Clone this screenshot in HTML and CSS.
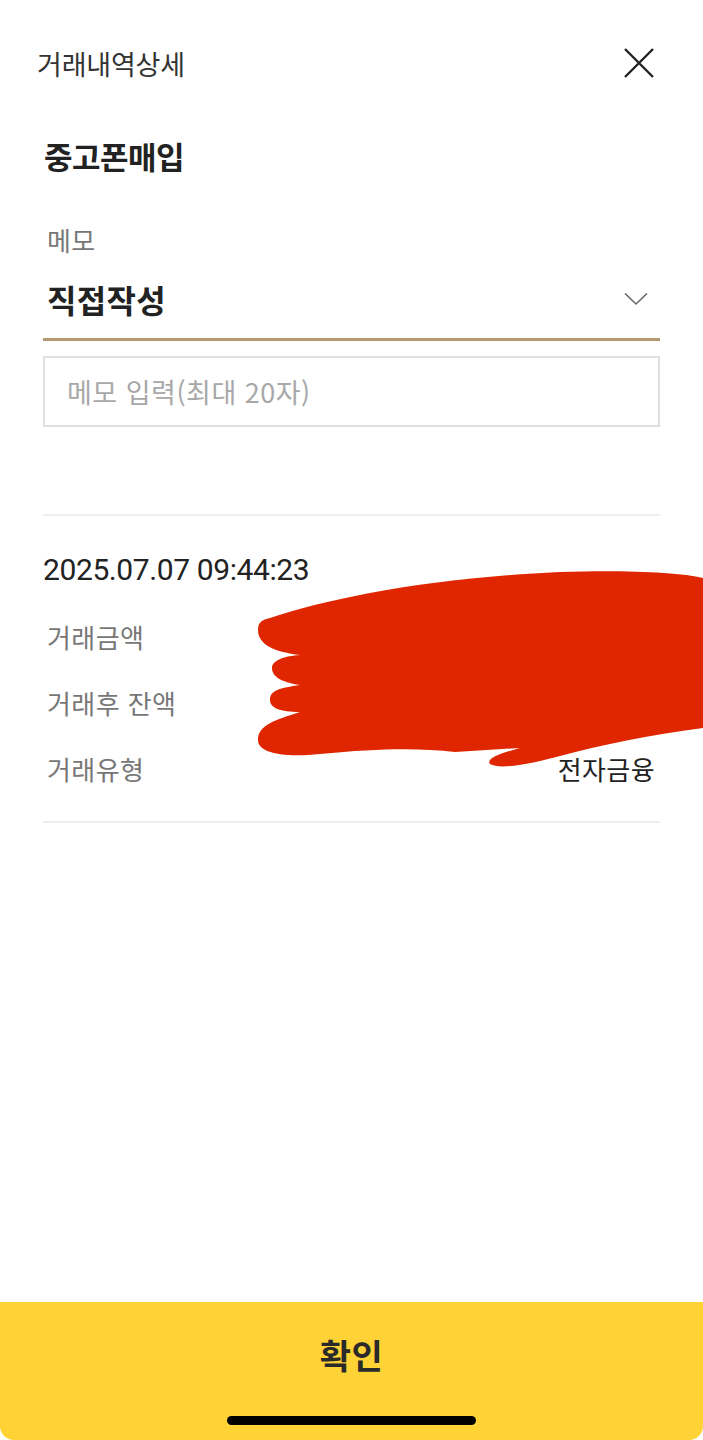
FILE: index.html
```html
<!DOCTYPE html>
<html lang="ko">
<head>
<meta charset="utf-8">
<title>거래내역상세</title>
<link rel="stylesheet" href="styles.css">
</head>
<body>
<div class="page">
  <main class="main">
    <header class="header">
      <h1 class="title">거래내역상세</h1>
      <button class="close" aria-label="닫기">
        <svg width="32" height="32" viewBox="0 0 32 32"><path d="M2 2 L30 30 M30 2 L2 30" stroke="#222" stroke-width="2.4" fill="none"/></svg>
      </button>
    </header>
    <section class="content">
      <div class="subject">중고폰매입</div>
      <div class="memo-label">메모</div>
      <div class="select">
        <span class="select-value">직접작성</span>
        <svg class="chev" width="24" height="14" viewBox="0 0 24 14"><path d="M1 1.5 L12 12 L23 1.5" stroke="#666" stroke-width="1.6" fill="none"/></svg>
      </div>
      <div class="input">메모 입력(최대 20자)</div>
      <div class="divider first"></div>
      <div class="date">2025.07.07 09:44:23</div>
      <div class="row"><span class="label">거래금액</span><span class="value"></span></div>
      <div class="row"><span class="label">거래후 잔액</span><span class="value"></span></div>
      <div class="row"><span class="label">거래유형</span><span class="value">전자금융</span></div>
      <div class="divider last"></div>
    </section>
  </main>
  <footer class="footer">
    <div class="confirm">확인</div>
    <div class="home-bar"></div>
  </footer>
  <svg class="scribble" width="703" height="1440" viewBox="0 0 703 1440">
    <path fill="#E02600" d="M270 618 C330 598 430 578 560 572 C620 570 680 572 703 578 L703 728 C650 735 600 745 560 756 C530 764 500 770 490 764 C485 758 505 752 520 748 L455 752 C420 748 380 748 320 754 C280 758 258 752 258 740 C258 725 275 720 300 712 C280 712 270 708 270 700 C270 690 280 688 300 685 C280 682 272 676 272 668 C272 660 285 656 300 655 C275 652 258 645 258 630 C258 622 262 620 270 618 Z"/>
  </svg>
</div>
</body>
</html>
```

FILE: styles.css
```css
html, body {
  margin: 0;
  padding: 0;
  background: #ffffff;
}
body {
  font-family: "Noto Sans CJK KR", "Noto Sans", Roboto, sans-serif;
  color: #222;
}
.page {
  position: relative;
  width: 703px;
  height: 1440px;
  display: flex;
  flex-direction: column;
  overflow: hidden;
}
.main {
  flex: 1;
}
.header {
  height: 126px;
  display: flex;
  align-items: center;
  justify-content: space-between;
  padding: 0 48px 0 37px;
}
.title {
  margin: 0;
  font-size: 27px;
  font-weight: 400;
  letter-spacing: -0.2px;
  color: #333;
}
.close {
  border: 0;
  background: none;
  padding: 0;
  width: 32px;
  height: 32px;
  display: flex;
}
.content {
  padding: 0 43px;
}
.subject {
  height: 60px;
  line-height: 60px;
  font-size: 31px;
  font-weight: 700;
  letter-spacing: -0.5px;
  padding-left: 1px;
  color: #222;
}
.memo-label {
  margin-top: 36px;
  height: 36px;
  line-height: 36px;
  font-size: 26px;
  letter-spacing: 0.4px;
  color: #777;
  padding-left: 4px;
}
.select {
  display: flex;
  align-items: center;
  justify-content: space-between;
  padding: 16px 12px 14px 4px;
  border-bottom: 3px solid #b49a72;
}
.select-value {
  height: 50px;
  line-height: 50px;
  font-size: 32px;
  font-weight: 700;
  letter-spacing: 0.3px;
  color: #222;
}
.chev {
  display: block;
}
.input {
  margin-top: 15px;
  height: 67px;
  border: 2px solid #e0e0e0;
  line-height: 67px;
  padding-left: 22px;
  font-size: 27px;
  letter-spacing: 0.5px;
  color: #a8a8a8;
}
.divider {
  height: 2px;
  background: #eeeeee;
}
.divider.first {
  margin-top: 87px;
}
.divider.last {
  margin-top: 20px;
}
.date {
  margin-top: 34px;
  height: 40px;
  line-height: 40px;
  font-family: Roboto, "Noto Sans", sans-serif;
  font-size: 30px;
  letter-spacing: -0.4px;
  color: #222;
}
.date + .row {
  margin-top: 13px;
}
.row {
  height: 66px;
  display: flex;
  align-items: center;
  justify-content: space-between;
  padding: 0 5px 0 4px;
}
.label {
  font-size: 26px;
  letter-spacing: 0.4px;
  color: #777;
}
.value {
  font-size: 26px;
  letter-spacing: 0.4px;
  color: #222;
}
.footer {
  height: 138px;
  background: #ffd335;
  border-radius: 0 0 14px 14px;
  display: flex;
  flex-direction: column;
  align-items: center;
}
.confirm {
  height: 106px;
  line-height: 106px;
  font-size: 34px;
  font-weight: 700;
  color: #2a2a2a;
  letter-spacing: 0.5px;
}
.home-bar {
  margin-top: 8px;
  width: 249px;
  height: 9px;
  border-radius: 5px;
  background: #000;
}
.scribble {
  position: absolute;
  left: 0;
  top: 0;
  pointer-events: none;
}
```
